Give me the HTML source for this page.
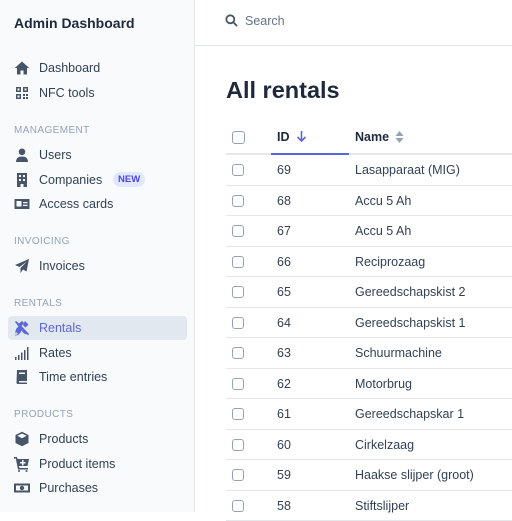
<!DOCTYPE html>
<html><head><meta charset="utf-8"><style>
*{margin:0;padding:0;box-sizing:border-box}
body{width:512px;height:512px;overflow:hidden;font-family:"Liberation Sans","DejaVu Sans",sans-serif;background:#fff;position:relative;color:#1e293b}
.sb{position:absolute;left:0;top:0;width:195px;height:512px;background:#f8fafc;border-right:1px solid #e5e7eb}
.title{position:absolute;left:14px;top:15px;font-size:14px;font-weight:bold;color:#1e293b}
.it{position:absolute;left:8px;width:179px;height:24px;display:flex;align-items:center;font-size:12.5px;color:#334155}
.it svg{position:absolute;left:6px;width:16px;height:16px;fill:#475569}
.it span{position:absolute;left:31px}
.act{background:#e2e8f0;border-radius:4px;color:#5a67d8}
.act svg{fill:#5a67d8}
.sec{position:absolute;left:14px;font-size:10px;color:#94a3b8;letter-spacing:.4px}
.new{position:absolute;left:105px;top:4px;background:#e0e7ff;color:#4f46e5;font-size:9.5px;padding:2px 5px;border-radius:8px;font-weight:bold}
.top{position:absolute;left:195px;top:0;right:0;height:46px;border-bottom:1px solid #e5e7eb}
.srch{position:absolute;left:50px;top:14px;font-size:12.5px;color:#64748b}
h1{position:absolute;left:226px;top:77px;font-size:23.5px;font-weight:bold;color:#1e293b}
.row{position:absolute;left:226px;width:286px;height:30.5px;border-bottom:1px solid #e5e7eb;font-size:12.5px;color:#334155}
.cb{position:absolute;left:6px;top:9px;width:12px;height:12px;border:1.5px solid #94a3b8;border-radius:3px;background:#fff}
.id{position:absolute;left:51px;top:8px}
.nm{position:absolute;left:129px;top:8px}
</style></head><body>
<div class="sb">
<div class="title">Admin Dashboard</div>
<div class="it" style="top:56px"><svg viewBox="0 0 16 16"><path d="M8 1.5 0.8 8H3v6.5h3.5v-4h3v4H13V8h2.2z"/></svg><span>Dashboard</span></div>
<div class="it" style="top:81px"><svg viewBox="0 0 16 16"><path d="M2 2h5v5H2zM3.5 3.5v2h2v-2zM9 2h5v5H9zM10.5 3.5v2h2v-2zM2 9h5v5H2zM3.5 10.5v2h2v-2zM9 9h2v2H9zM12 9h2v2h-2zM9 12h2v2H9zM12 12h2v2h-2z"/></svg><span>NFC tools</span></div>
<div class="sec" style="top:125px">MANAGEMENT</div>
<div class="it" style="top:143px"><svg viewBox="0 0 16 16"><circle cx="8" cy="4.8" r="3.3"/><path d="M2 15c0-4 2.5-5.5 6-5.5s6 1.5 6 5.5z"/></svg><span>Users</span></div>
<div class="it" style="top:168px"><svg viewBox="0 0 16 16"><path d="M3 1h10v14H9.5v-3h-3v3H3zM5 3v2h2V3zM9 3v2h2V3zM5 7v2h2V7zM9 7v2h2V7z"/></svg><span>Companies</span><div class="new">NEW</div></div>
<div class="it" style="top:192px"><svg viewBox="0 0 16 16"><path d="M0.5 3h15v10H.5zM2.5 5v5.5h5V5zM9 6v1.3h4.5V6zM9 8.7v1.3h4.5V8.7z"/></svg><span>Access cards</span></div>
<div class="sec" style="top:236px">INVOICING</div>
<div class="it" style="top:254px"><svg viewBox="0 0 16 16"><path d="M15 1 1 7l4.5 2L13 3.5 6.5 10v5l2.5-3.5 3.5 2z"/></svg><span>Invoices</span></div>
<div class="sec" style="top:298px">RENTALS</div>
<div class="it act" style="top:316px"><svg viewBox="0 0 16 16"><path d="M2 1 1 2l3.5 4.5L2 9l-1 6 5-1.5 1.5-3 2.5 3L14.5 15 15 14 7.5 6 10 3l-2-2-3 2.5zM11 1l3.5 3.5-3 3L9 5zM1 11l4 4-4 .5z"/></svg><span>Rentals</span></div>
<div class="it" style="top:341px"><svg viewBox="0 0 16 16"><path d="M1 12h1.5v3H1zM4 10h1.5v5H4zM7 7.5h1.5V15H7zM10 5h1.5v10H10zM13 2h1.5v13H13z"/></svg><span>Rates</span></div>
<div class="it" style="top:365px"><svg viewBox="0 0 16 16"><path d="M3 1h10v11H5v1.5h8V15H4a1.5 1.5 0 0 1-1.5-1.5zM5 3.5v1.5h6V3.5z"/></svg><span>Time entries</span></div>
<div class="sec" style="top:409px">PRODUCTS</div>
<div class="it" style="top:427px"><svg viewBox="0 0 16 16"><path d="M8 .8 14.5 4v8L8 15.2 1.5 12V4zM3.3 4.8 8 7.2l4.7-2.4L8 2.6z"/></svg><span>Products</span></div>
<div class="it" style="top:452px"><svg viewBox="0 0 16 16"><path d="M0 1h3l.5 2H15l-1.5 7H5l.5 2H14v1.5H4L1.8 2.5H0zM8 4v2H6v1.5h2v2h1.5v-2h2V6h-2V4zM5 14a1 1 0 1 0 0 2 1 1 0 0 0 0-2zM12.5 14a1 1 0 1 0 0 2 1 1 0 0 0 0-2z"/></svg><span>Product items</span></div>
<div class="it" style="top:476px"><svg viewBox="0 0 16 16"><path d="M0 3.5h16v9H0zM2 5.5v5h12v-5zM8 5.8a2.2 2.2 0 1 0 0 4.4 2.2 2.2 0 0 0 0-4.4z"/></svg><span>Purchases</span></div>
</div>
<div class="top"><svg style="position:absolute;left:30px;top:14px" width="13" height="13" viewBox="0 0 13 13"><circle cx="5.3" cy="5.3" r="4" fill="none" stroke="#475569" stroke-width="1.8"/><path d="M8.3 8.3 12 12" stroke="#475569" stroke-width="1.8"/></svg><div class="srch">Search</div></div>
<h1>All rentals</h1>
<div class="row" style="top:121px;height:34px;border-bottom:2px solid #e5e7eb;font-weight:bold;color:#1e293b">
<div class="cb" style="top:10px;width:13px;height:13px"></div>
<div class="id" style="top:9px">ID</div>
<svg style="position:absolute;left:70px;top:9px" width="11" height="13" viewBox="0 0 11 13"><path d="M5.5 1v10M1.5 7l4 4 4-4" fill="none" stroke="#5a67d8" stroke-width="1.6"/></svg>
<div style="position:absolute;left:45px;width:78px;bottom:-2px;height:2px;background:#5a67d8"></div>
<div class="nm" style="top:9px">Name</div>
<svg style="position:absolute;left:169px;top:10px" width="9" height="12" viewBox="0 0 9 12"><path d="M4.5 0 8.5 5H.5zM4.5 12 8.5 7H.5z" fill="#94a3b8"/></svg>
</div>
<div class="row" style="top:155px"><div class="cb"></div><div class="id">69</div><div class="nm">Lasapparaat (MIG)</div></div>
<div class="row" style="top:185.5px"><div class="cb"></div><div class="id">68</div><div class="nm">Accu 5 Ah</div></div>
<div class="row" style="top:216px"><div class="cb"></div><div class="id">67</div><div class="nm">Accu 5 Ah</div></div>
<div class="row" style="top:246.5px"><div class="cb"></div><div class="id">66</div><div class="nm">Reciprozaag</div></div>
<div class="row" style="top:277px"><div class="cb"></div><div class="id">65</div><div class="nm">Gereedschapskist 2</div></div>
<div class="row" style="top:307.5px"><div class="cb"></div><div class="id">64</div><div class="nm">Gereedschapskist 1</div></div>
<div class="row" style="top:338px"><div class="cb"></div><div class="id">63</div><div class="nm">Schuurmachine</div></div>
<div class="row" style="top:368.5px"><div class="cb"></div><div class="id">62</div><div class="nm">Motorbrug</div></div>
<div class="row" style="top:399px"><div class="cb"></div><div class="id">61</div><div class="nm">Gereedschapskar 1</div></div>
<div class="row" style="top:429.5px"><div class="cb"></div><div class="id">60</div><div class="nm">Cirkelzaag</div></div>
<div class="row" style="top:460px"><div class="cb"></div><div class="id">59</div><div class="nm">Haakse slijper (groot)</div></div>
<div class="row" style="top:490.5px"><div class="cb"></div><div class="id">58</div><div class="nm">Stiftslijper</div></div>
</body></html>
